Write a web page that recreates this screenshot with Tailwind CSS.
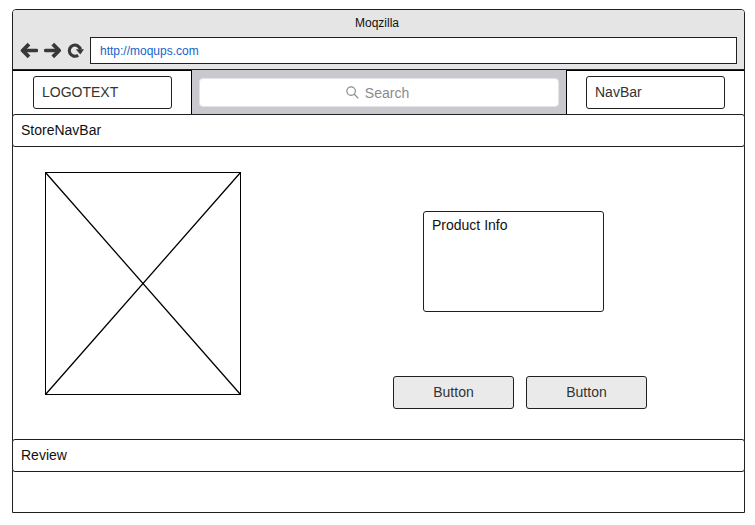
<!DOCTYPE html>
<html lang="en">
<head>
<meta charset="utf-8">
<title>Moqzilla</title>
<script src="https://cdn.jsdelivr.net/npm/@tailwindcss/browser@4"></script>
</head>
<body class="bg-white font-['Liberation_Sans',Arial,sans-serif] text-sm text-[#111]">
<div class="w-[755px] h-[525px] pt-[9px] pl-3 overflow-hidden">
  <main class="w-[733px] h-[504px] flex flex-col border border-[#202020] rounded-t-[4px]">
    <!-- Browser chrome -->
    <header class="h-[60px] shrink-0 bg-[#e5e5e5] border-b border-[#202020] rounded-t-[3px]">
      <h1 class="h-[27px] leading-[26px] text-center text-xs pr-[3px]">Moqzilla</h1>
      <div class="flex items-center h-[27px] pl-[7px] pr-[7px]">
        <svg class="w-[18px] h-[18px] shrink-0" viewBox="0 0 18 18" fill="none" stroke="#383838" stroke-width="3.8" stroke-linejoin="round"><path d="M16.8 8.5H4" stroke-linecap="round" stroke-width="3.4"/><path d="M9 2.2 2.6 8.5 9 14.8"/></svg>
        <svg class="w-[18px] h-[18px] shrink-0 ml-[6px]" viewBox="0 0 18 18" fill="none" stroke="#383838" stroke-width="3.8" stroke-linejoin="round"><path d="M1.6 8.5H14" stroke-linecap="round" stroke-width="3.4"/><path d="m8.8 2.2 6.4 6.3-6.4 6.3"/></svg>
        <svg class="w-[18px] h-[18px] shrink-0 ml-[5px]" viewBox="0 0 18 18"><path d="M11.2 13.2A5.6 5.6 0 1 1 13.4 7.6" fill="none" stroke="#383838" stroke-width="3.1"/><path d="M8.8 7.2h8.2l-3.7 5.3z" fill="#383838"/></svg>
        <div class="ml-[5px] flex-1 h-[27px] border border-[#202020] bg-white pl-[9px] text-xs leading-[26px] text-[#1464c8]">http://moqups.com</div>
      </div>
    </header>
    <!-- Logo, search, navigation -->
    <div class="flex h-11 shrink-0">
      <div class="w-[179px] border-t border-r border-black pl-5 pt-[5px]">
        <div class="w-[139px] h-[33px] border border-[#202020] rounded-[3px] pl-2 leading-[31px] text-[#333]">LOGOTEXT</div>
      </div>
      <div class="w-[374px] bg-[#c9c8ce] pl-[7px] pt-2">
        <div class="w-[360px] h-[29px] bg-white rounded-[4px] border border-[#e4e3e7] flex items-center justify-center pr-[3px] text-[#8a8a8c]">
          <svg class="w-[13px] h-[13px] mr-[6px]" viewBox="0 0 14 14" fill="none" stroke="#8a8a8c" stroke-width="1.3"><circle cx="5.5" cy="5.5" r="4.6"/><path d="m8.9 8.9 4.4 4.4"/></svg>
          <span>Search</span>
        </div>
      </div>
      <div class="flex-1 border-t border-l border-black pl-[19px] pt-[5px]">
        <div class="w-[139px] h-[33px] border border-[#202020] rounded-[3px] pl-2 leading-[31px] text-[#333]">NavBar</div>
      </div>
    </div>
    <nav class="-mx-px h-[33px] shrink-0 border border-[#202020] rounded-[3px] bg-white pl-2 leading-[31px]">StoreNavBar</nav>
    <!-- Product -->
    <section class="h-[292px] shrink-0 flex">
      <svg class="ml-8 mt-[25px] w-[196px] h-[223px] shrink-0" viewBox="0 0 196 223" fill="none" stroke="#000"><rect x=".5" y=".5" width="195" height="222"/><path d="M.5.5l195 222M195.5.5l-195 222" stroke-width="1.3"/></svg>
      <div class="ml-[152px] pt-16">
        <div class="ml-[30px] w-[181px] h-[101px] border border-[#202020] rounded-[3px] pl-2 leading-[27px]">Product Info</div>
        <div class="mt-16 flex gap-3">
          <button class="w-[121px] h-[33px] pb-[2px] border border-[#202020] rounded-[3px] bg-[#eaeaea] text-[#333]">Button</button>
          <button class="w-[121px] h-[33px] pb-[2px] border border-[#202020] rounded-[3px] bg-[#eaeaea] text-[#333]">Button</button>
        </div>
      </div>
    </section>
    <div class="-mx-px h-[33px] shrink-0 border border-[#202020] rounded-[3px] bg-white pl-2 leading-[31px]">Review</div>
  </main>
</div>
</body>
</html>
